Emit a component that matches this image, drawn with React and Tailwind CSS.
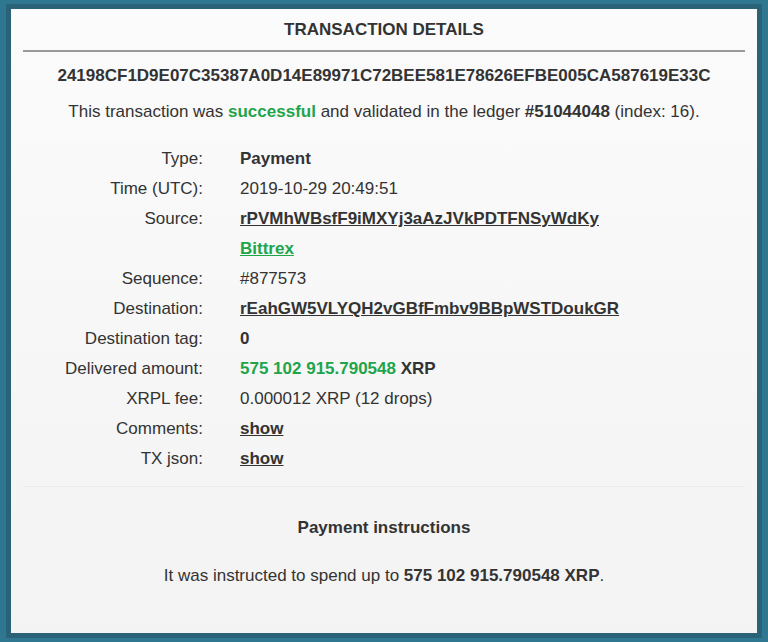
import React from "react";

const rows = [
  ["Type:", <span className="font-bold">Payment</span>],
  ["Time (UTC):", "2019-10-29 20:49:51"],
  ["Source:", <a className="font-bold underline">rPVMhWBsfF9iMXYj3aAzJVkPDTFNSyWdKy</a>],
  ["", <a className="font-bold underline text-[#1ea54c]">Bittrex</a>],
  ["Sequence:", "#877573"],
  ["Destination:", <a className="font-bold underline">rEahGW5VLYQH2vGBfFmbv9BBpWSTDoukGR</a>],
  ["Destination tag:", <span className="font-bold">0</span>],
  [
    "Delivered amount:",
    <span className="font-bold">
      <span className="text-[#1ea54c]">575 102 915.790548</span> XRP
    </span>,
  ],
  ["XRPL fee:", "0.000012 XRP (12 drops)"],
  ["Comments:", <a className="font-bold underline">show</a>],
  ["TX json:", <a className="font-bold underline">show</a>],
];

export default function App() {
  return (
    <div
      className="w-[768px] h-[642px] overflow-hidden bg-[#2f7791] pl-[11px] pt-[9px] text-[#333]"
      style={{ fontFamily: '"Liberation Sans", Arial, sans-serif' }}
    >
      <div className="w-[746px] h-[624px] bg-gradient-to-b from-[#fbfbfb] to-[#f3f3f3] shadow-[0_0_0_5px_#2a6378] px-[12px] pt-[11px]">
        <div className="text-center text-[17px] leading-[20px] font-bold">TRANSACTION DETAILS</div>
        <div className="mt-[10px] h-[2px] bg-[#999]" />
        <div className="mt-[14px] text-center text-[17px] leading-[20px] font-bold">
          24198CF1D9E07C35387A0D14E89971C72BEE581E78626EFBE005CA587619E33C
        </div>
        <div className="mt-[16px] text-center text-[17px] leading-[20px]">
          This transaction was <span className="font-bold text-[#1ea54c]">successful</span> and validated in the
          ledger <span className="font-bold">#51044048</span> (index: 16).
        </div>
        <div className="mt-[22px] grid grid-cols-[180px_1fr] text-[17px]">
          {rows.map(([label, value], i) => (
            <React.Fragment key={i}>
              <div className="h-[30px] leading-[30px] text-right">{label}</div>
              <div className="h-[30px] leading-[30px] pl-[37px]">{value}</div>
            </React.Fragment>
          ))}
        </div>
        <div className="mt-[12px] h-[1px] bg-[#ececec]" />
        <div className="mt-[31px] text-center text-[17px] leading-[20px] font-bold">Payment instructions</div>
        <div className="mt-[28px] text-center text-[17px] leading-[20px]">
          It was instructed to spend up to <span className="font-bold">575 102 915.790548 XRP</span>.
        </div>
      </div>
    </div>
  );
}
